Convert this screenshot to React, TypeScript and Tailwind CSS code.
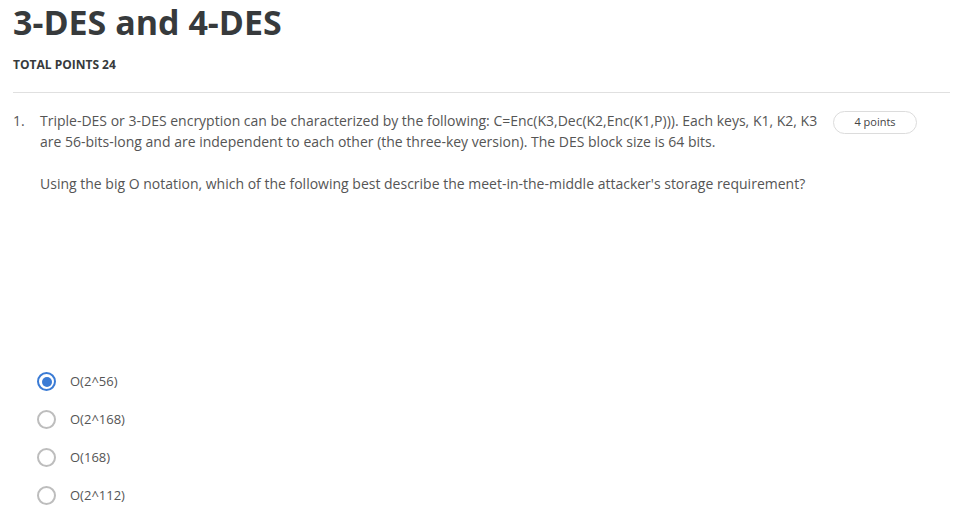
import React from "react";

const options = ["O(2^56)", "O(2^168)", "O(168)", "O(2^112)"];

function Radio({ checked }: { checked: boolean }) {
  return checked ? (
    <span className="flex h-[19px] w-[19px] shrink-0 items-center justify-center rounded-full border-2 border-[#3a7bd5] bg-white">
      <span className="h-[10px] w-[10px] rounded-full bg-[#3a7bd5]" />
    </span>
  ) : (
    <span className="h-[19px] w-[19px] shrink-0 rounded-full border-2 border-[#bdbdbd] bg-white" />
  );
}

export default function App() {
  return (
    <div
      className="min-h-[524px] w-[970px] bg-white pl-[13px] pr-[20px] text-[#555]"
      style={{ fontFamily: '"Open Sans", sans-serif' }}
    >
      <h1 className="pt-[2px] text-[34px] font-bold leading-[40px] text-[#373a3c]">3-DES and 4-DES</h1>
      <div className="mt-[15px] text-[12px] font-bold uppercase leading-[16px] text-[#373a3c]">Total points 24</div>
      <div className="mt-[19px] border-t border-[#e0e0e0]" />
      <div className="mt-[17px] flex">
        <div className="w-[27px] text-[14px] leading-[21px]">1.</div>
        <div className="w-[788px] text-[14px] leading-[21px]">
          <p>
            Triple-DES or 3-DES encryption can be characterized by the following: C=Enc(K3,Dec(K2,Enc(K1,P))). Each keys, K1, K2, K3 are 56-bits-long and are independent to each other (the three-key version). The DES block size is 64 bits.
          </p>
          <p className="mt-[21px]">
            Using the big O notation, which of the following best describe the meet-in-the-middle attacker's storage requirement?
          </p>
        </div>
        <div className="ml-[5px]">
          <span className="mt-[1px] flex h-[23px] w-[84px] items-center justify-center rounded-full border border-[#dcdcdc] text-[11px] text-[#444]">
            4 points
          </span>
        </div>
      </div>
      <div className="mt-[178px] flex flex-col gap-[19px] pl-[24px]">
        {options.map((o, i) => (
          <label key={o} className="flex items-center gap-[14px] text-[13px] leading-[19px] text-[#555]">
            <Radio checked={i === 0} />
            <span>{o}</span>
          </label>
        ))}
      </div>
    </div>
  );
}
